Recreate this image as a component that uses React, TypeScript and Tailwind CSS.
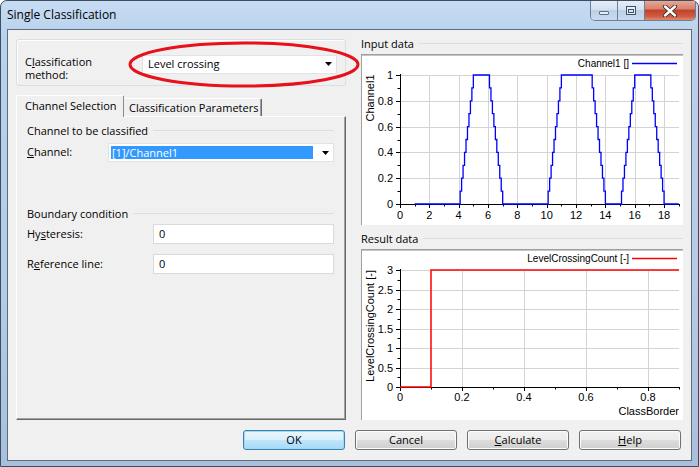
import React from "react";

const crisp = (v: number) => Math.round(v) + 0.5;

function Arrow() {
  return (
    <svg width="7" height="4" viewBox="0 0 7 4">
      <path d="M0 0H7L3.5 4Z" fill="#000" />
    </svg>
  );
}

function InputChart() {
  const x0 = 39;
  const sx = 14.67;
  const y0 = 150;
  const sy = 129;
  const X = (t: number) => x0 + t * sx;
  const Y = (v: number) => y0 - v * sy;
  const f = (t: number) => {
    if (t <= 4) return 0;
    if (t <= 5) return t - 4;
    if (t <= 6) return 1;
    if (t <= 7) return 7 - t;
    if (t <= 10) return 0;
    if (t <= 11) return t - 10;
    if (t <= 13) return 1;
    if (t <= 14) return 14 - t;
    if (t <= 15) return 0;
    if (t <= 16) return t - 15;
    if (t <= 17) return 1;
    if (t <= 18) return 18 - t;
    return 0;
  };
  let d = `M${X(1).toFixed(2)} ${Y(0).toFixed(2)}`;
  let prev = 0;
  for (let k = 11; k <= 190; k++) {
    const t = k / 10;
    const v = Math.max(0, Math.min(1, Math.round(f(t) * 1000) / 1000));
    d += ` L${X(t).toFixed(2)} ${Y(prev).toFixed(2)} L${X(t).toFixed(2)} ${Y(v).toFixed(2)}`;
    prev = v;
  }
  const xs = Array.from({ length: 20 }, (_, i) => i);
  const ys = [0, 0.2, 0.4, 0.6, 0.8, 1];
  const yMinor = Array.from({ length: 11 }, (_, i) => i / 10);
  return (
    <svg width="322" height="171" viewBox="0 0 322 171" fontFamily="'Liberation Sans', Arial, sans-serif" fontSize="11">
      <rect x="0" y="0" width="322" height="171" fill="#fff" />
      <line x1="0" y1="0.5" x2="322" y2="0.5" stroke="#a0a0a0" />
      <line x1="0" y1="1.5" x2="322" y2="1.5" stroke="#c4c4c4" />
      <line x1="0.5" y1="0" x2="0.5" y2="171" stroke="#a0a0a0" />
      {xs.filter((t) => t % 2 === 0 && t > 0).map((t) => (
        <line key={"gx" + t} x1={crisp(X(t))} y1={Y(1)} x2={crisp(X(t))} y2={y0} stroke="#d4d4d4" />
      ))}
      {ys.filter((v) => v > 0).map((v) => (
        <line key={"gy" + v} x1={x0} y1={crisp(Y(v))} x2={318} y2={crisp(Y(v))} stroke="#d4d4d4" />
      ))}
      <line x1={crisp(x0)} y1={Y(1) - 1} x2={crisp(x0)} y2={y0 + 1} stroke="#000" />
      <line x1={x0} y1={crisp(y0)} x2={319} y2={crisp(y0)} stroke="#000" />
      {xs.map((t) => (
        <line key={"tx" + t} x1={crisp(X(t))} y1={y0} x2={crisp(X(t))} y2={y0 + (t % 2 === 0 ? 4 : 2.5)} stroke="#000" />
      ))}
      {yMinor.map((v, i) => (
        <line key={"ty" + i} x1={x0 - (i % 2 === 0 ? 4 : 2.5)} y1={crisp(Y(v))} x2={x0} y2={crisp(Y(v))} stroke="#000" />
      ))}
      {xs.filter((t) => t % 2 === 0).map((t) => (
        <text key={"lx" + t} x={X(t)} y={165} textAnchor="middle" fill="#000">{t}</text>
      ))}
      {ys.map((v) => (
        <text key={"ly" + v} x={32} y={Y(v) + 4} textAnchor="end" fill="#000">{String(v)}</text>
      ))}
      <text transform="translate(13 44) rotate(-90)" textAnchor="middle" fill="#000">Channel1</text>
      <text x={268} y={13} textAnchor="end" fontSize="10" fill="#000">Channel1 []</text>
      <line x1={271} y1={9.5} x2={316} y2={9.5} stroke="#0000ff" strokeWidth="1.3" />
      <path d={d} fill="none" stroke="#0000ff" strokeWidth="1.3" />
    </svg>
  );
}

function ResultChart() {
  const x0 = 39;
  const sx = 310;
  const y0 = 138;
  const sy = 39;
  const X = (t: number) => x0 + t * sx;
  const Y = (v: number) => y0 - v * sy;
  const xMinor = Array.from({ length: 10 }, (_, i) => i / 10);
  const xMajor = [0, 0.2, 0.4, 0.6, 0.8];
  const yMajor = [0, 0.5, 1, 1.5, 2, 2.5, 3];
  const yMinor = Array.from({ length: 13 }, (_, i) => i / 4);
  return (
    <svg width="322" height="171" viewBox="0 0 322 171" fontFamily="'Liberation Sans', Arial, sans-serif" fontSize="11">
      <rect x="0" y="0" width="322" height="171" fill="#fff" />
      <line x1="0" y1="0.5" x2="322" y2="0.5" stroke="#a0a0a0" />
      <line x1="0" y1="1.5" x2="322" y2="1.5" stroke="#c4c4c4" />
      <line x1="0.5" y1="0" x2="0.5" y2="171" stroke="#a0a0a0" />
      {xMajor.filter((t) => t > 0).map((t) => (
        <line key={"gx" + t} x1={crisp(X(t))} y1={Y(3)} x2={crisp(X(t))} y2={y0} stroke="#d4d4d4" />
      ))}
      {yMajor.filter((v) => v > 0).map((v) => (
        <line key={"gy" + v} x1={x0} y1={crisp(Y(v))} x2={318} y2={crisp(Y(v))} stroke="#d4d4d4" />
      ))}
      <line x1={crisp(x0)} y1={Y(3) - 1} x2={crisp(x0)} y2={y0 + 1} stroke="#000" />
      <line x1={x0} y1={crisp(y0)} x2={319} y2={crisp(y0)} stroke="#000" />
      {xMinor.map((t, i) => (
        <line key={"tx" + i} x1={crisp(X(t))} y1={y0} x2={crisp(X(t))} y2={y0 + (i % 2 === 0 ? 4 : 2.5)} stroke="#000" />
      ))}
      {yMinor.map((v, i) => (
        <line key={"ty" + i} x1={x0 - (i % 2 === 0 ? 4 : 2.5)} y1={crisp(Y(v))} x2={x0} y2={crisp(Y(v))} stroke="#000" />
      ))}
      {xMajor.map((t) => (
        <text key={"lx" + t} x={X(t)} y={152} textAnchor="middle" fill="#000">{String(t)}</text>
      ))}
      {yMajor.map((v) => (
        <text key={"ly" + v} x={32} y={Y(v) + 4} textAnchor="end" fill="#000">{String(v)}</text>
      ))}
      <text x={318} y={166} textAnchor="end" fill="#000">ClassBorder</text>
      <text transform="translate(13 77) rotate(-90)" textAnchor="middle" fill="#000">LevelCrossingCount [-]</text>
      <text x={268} y={13} textAnchor="end" fontSize="10" fill="#000">LevelCrossingCount [-]</text>
      <line x1={271} y1={9.5} x2={316} y2={9.5} stroke="#ff0000" strokeWidth="1.3" />
      <path d={`M${x0} ${crisp(y0) - 0.5} H${X(0.1)} V${Y(3)} H318`} fill="none" stroke="#ff0000" strokeWidth="1.5" />
    </svg>
  );
}

function Btn({ children, def }: { children: React.ReactNode; def?: boolean }) {
  return (
    <div
      className={
        def
          ? "w-[102px] h-[20px] rounded-[3px] border border-[#3c7fb1] shadow-[inset_0_0_0_1px_#9fd9f4] bg-[linear-gradient(#eaf6fd_0%,#d9f0fc_50%,#bee6fd_50%,#a7d9f5_100%)] flex items-center justify-center"
          : "w-[102px] h-[20px] rounded-[3px] border border-[#707070] shadow-[inset_0_0_0_1px_#fcfcfc] bg-[linear-gradient(#f2f2f2_0%,#ebebeb_50%,#dddddd_50%,#cfcfcf_100%)] flex items-center justify-center"
      }
    >
      {children}
    </div>
  );
}

function Header({ title }: { title: string }) {
  return (
    <div className="h-[15px] flex items-center">
      <span className="leading-[15px] whitespace-nowrap">{title}</span>
      <div className="flex-1 h-px bg-[#d5dfe5] ml-[5px] mt-[-1px]" />
    </div>
  );
}

export default function App() {
  return (
    <div className="w-[699px] h-[467px] overflow-hidden bg-white">
      <div className="relative w-[699px] h-[467px] rounded-t-[7px] border border-[#3c4d63] bg-[linear-gradient(#c6dcf3_0%,#b9d1ec_8%,#b5cce7_60%,#a9c0dc_100%)] flex flex-col font-[family-name:'Open_Sans',sans-serif] text-[11px] text-black">
        {/* title bar */}
        <div className="h-[28px] flex items-center pl-[6px] text-[12px] leading-none">Single Classification</div>

        {/* caption buttons */}
        <div className="absolute top-0 right-[2px] flex h-[20px] rounded-b-[5px] overflow-hidden border border-t-0 border-[#6b7f99]">
          <div className="w-[27px] h-full bg-[linear-gradient(#e4edf7_0%,#d3e1f0_45%,#bcd0e6_50%,#c9dbee_100%)] border-r border-[#6b7f99] flex items-center justify-center">
            <div className="w-[10px] h-[4px] mt-[5px] bg-[#e9eef4] border border-[#5d6f86] rounded-[1px]" />
          </div>
          <div className="w-[27px] h-full bg-[linear-gradient(#e4edf7_0%,#d3e1f0_45%,#bcd0e6_50%,#c9dbee_100%)] border-r border-[#6b7f99] flex items-center justify-center">
            <div className="w-[10px] h-[9px] bg-[#e9eef4] border border-[#3f5067] flex items-center justify-center">
              <div className="w-[6px] h-[4px] mt-[1px] border border-[#3f5067] bg-[#dde6f0]" />
            </div>
          </div>
          <div className="w-[50px] h-full bg-[linear-gradient(#e8a797_0%,#d9826c_40%,#c1442c_50%,#d15a3f_80%,#e08a6e_100%)] flex items-center justify-center">
            <svg width="16" height="12" viewBox="0 0 16 12">
              <path d="M3 1.5 L13 10.5 M13 1.5 L3 10.5" stroke="#3a2a2a" strokeWidth="4.2" strokeLinecap="round" />
              <path d="M3 1.5 L13 10.5 M13 1.5 L3 10.5" stroke="#ffffff" strokeWidth="2.4" strokeLinecap="round" />
            </svg>
          </div>
        </div>

        {/* client area */}
        <div className="mx-[6px] h-[432px] border border-[#5e6c7e] bg-[#f0f0f0] flex flex-col pt-[6px] pb-[10px]">
          <div className="flex h-[384px] pl-[8px]">
            {/* left column */}
            <div className="w-[330px] flex flex-col mt-[3px]">
              <div className="h-[47px] rounded-[3px] border border-[#d5dfe5] shadow-[inset_1px_1px_0_#ffffff] flex items-center pl-[8px]">
                <div className="w-[117px] mt-[10px] flex flex-col">
                  <div className="h-[13px] leading-[13px]">
                    C<span className="underline">l</span>assification
                  </div>
                  <div className="h-[13px] leading-[13px]">method:</div>
                </div>
                <div className="w-[195px] h-[19px] mt-[3px] bg-white border border-[#e2e2e2] flex items-center pl-[5px] pr-[4px] justify-between">
                  <span>Level crossing</span>
                  <Arrow />
                </div>
              </div>

              {/* tabs */}
              <div className="mt-[9px] h-[21px] flex items-end">
                <div className="relative z-10 h-[22px] -mb-px w-[108px] bg-[#f0f0f0] border-l border-t border-white border-r border-r-[#8a8a8a] rounded-t-[2px] pl-[8px] pt-[2px] leading-[15px] whitespace-nowrap">
                  Channel Selection
                </div>
                <div className="h-[18px] w-[138px] border-t border-white border-r border-r-[#696969] shadow-[inset_-1px_0_0_#a0a0a0] rounded-tr-[2px] pl-[5px] pt-[1px] leading-[15px] whitespace-nowrap">
                  Classification Parameters
                </div>
              </div>
              <div className="h-[304px] border-l border-t border-white border-r border-b border-r-[#696969] border-b-[#696969] shadow-[inset_-1px_-1px_0_#a0a0a0] pl-[10px] pr-[11px] pt-[6px] flex flex-col">
                <Header title="Channel to be classified" />
                <div className="mt-[5px] h-[19px] flex items-center">
                  <div className="w-[81px]">
                    <span className="underline">C</span>hannel:
                  </div>
                  <div className="flex-1 h-[19px] bg-white border border-[#e2e2e2] flex items-center p-[2px] pr-[4px]">
                    <div className="flex-1 h-full bg-[#3399ff] text-white flex items-center pl-[1px] leading-none">[1]/Channel1</div>
                    <div className="w-[16px] flex justify-end">
                      <Arrow />
                    </div>
                  </div>
                </div>
                <div className="mt-[44px]">
                  <Header title="Boundary condition" />
                </div>
                <div className="mt-[3px] h-[20px] flex items-center">
                  <div className="w-[126px]">
                    Hy<span className="underline">s</span>teresis:
                  </div>
                  <div className="flex-1 h-[20px] bg-white border border-[#dadada] flex items-center pl-[5px]">0</div>
                </div>
                <div className="mt-[10px] h-[20px] flex items-center">
                  <div className="w-[126px]">
                    R<span className="underline">e</span>ference line:
                  </div>
                  <div className="flex-1 h-[20px] bg-white border border-[#dadada] flex items-center pl-[5px]">0</div>
                </div>
              </div>
            </div>

            {/* right column */}
            <div className="w-[322px] ml-[15px] flex flex-col">
              <Header title="Input data" />
              <div className="mt-[3px] h-[171px]">
                <InputChart />
              </div>
              <div className="mt-[6px]">
                <Header title="Result data" />
              </div>
              <div className="mt-[3px] h-[171px]">
                <ResultChart />
              </div>
            </div>
          </div>

          {/* buttons */}
          <div className="mt-[10px] h-[20px] flex justify-end gap-[10px] pr-[10px]">
            <Btn def>OK</Btn>
            <Btn>Cancel</Btn>
            <Btn>
              <span className="underline">C</span>alculate
            </Btn>
            <Btn>
              <span className="underline">H</span>elp
            </Btn>
          </div>
        </div>

        {/* red annotation ellipse */}
        <svg className="absolute left-[127px] top-[40px]" width="232" height="47" viewBox="0 0 232 47">
          <ellipse cx="116" cy="23.5" rx="114" ry="21.5" fill="none" stroke="#e8101a" strokeWidth="3" />
        </svg>
      </div>
    </div>
  );
}
